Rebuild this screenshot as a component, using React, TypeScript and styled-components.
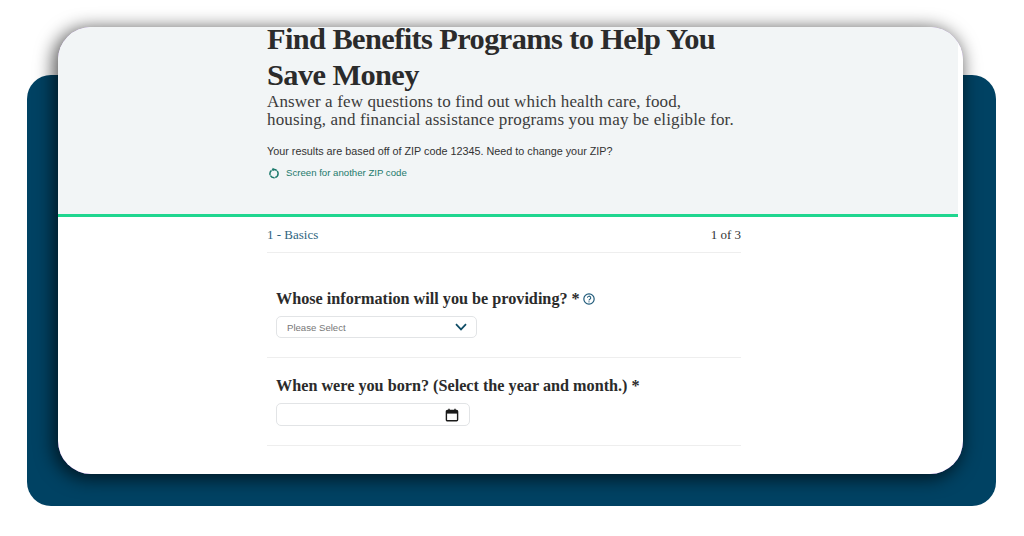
import React from "react";
import styled, { createGlobalStyle } from "styled-components";

const GlobalStyle = createGlobalStyle`
  html, body {
    margin: 0;
    padding: 0;
    background: #fff;
  }
`;

const App = () => {
  return (
    <>
      <GlobalStyle />
      <Stage>
        <Backdrop />
        <Card>
          <Surface>
            <Hero>
              <Column>
                <Title>Find Benefits Programs to Help You Save Money</Title>
                <Lead>
                  Answer a few questions to find out which health care, food,
                  housing, and financial assistance programs you may be eligible for.
                </Lead>
                <ZipNote>Your results are based off of ZIP code 12345. Need to change your ZIP?</ZipNote>
                <ZipLink>
                  <svg width="12" height="12" viewBox="0 0 12 12" fill="none">
                    <circle cx="6" cy="6.6" r="4.1" stroke="#1d7a6c" strokeWidth="1.5" strokeDasharray="5 .6" />
                    <path d="M4.4.8 7.6 2.4 4.8 4z" fill="#1d7a6c" />
                  </svg>
                  Screen for another ZIP code
                </ZipLink>
              </Column>
            </Hero>
            <HeroRule />
            <Column>
              <StepRow>
                <StepName>1 - Basics</StepName>
                <StepCount>1 of 3</StepCount>
              </StepRow>
              <Question $top={36} $bottom={19}>
                <QuestionLabel>
                  Whose information will you be providing? *
                  <svg width="12" height="12" viewBox="0 0 13 13" fill="none">
                    <circle cx="6.5" cy="6.5" r="5.6" stroke="#1f5a7a" strokeWidth="1.3" />
                    <path d="M4.8 5.2a1.8 1.8 0 1 1 2.6 1.6c-.6.3-.9.6-.9 1.2" stroke="#1f5a7a" strokeWidth="1.1" />
                    <circle cx="6.5" cy="9.6" r=".7" fill="#1f5a7a" />
                  </svg>
                </QuestionLabel>
                <SelectBox>
                  Please Select
                  <svg width="12" height="8" viewBox="0 0 12 8" fill="none">
                    <path d="M1 1.2 6 6.4l5-5.2" stroke="#0f4c66" strokeWidth="1.7" />
                  </svg>
                </SelectBox>
              </Question>
              <Question $top={18} $bottom={19}>
                <QuestionLabel>When were you born? (Select the year and month.) *</QuestionLabel>
                <DateBox>
                  <svg width="14" height="14" viewBox="0 0 14 14" fill="none">
                    <rect x="1.4" y="2.4" width="11.2" height="10.4" rx="1" stroke="#1a1a1a" strokeWidth="1.4" />
                    <path d="M1.4 3h11.2v2.6H1.4z" fill="#1a1a1a" />
                    <path d="M4 .8v2M10 .8v2" stroke="#1a1a1a" strokeWidth="1.4" />
                  </svg>
                </DateBox>
              </Question>
            </Column>
          </Surface>
        </Card>
      </Stage>
    </>
  );
};

export default App;

const Stage = styled.div`
  position: relative;
  width: 1024px;
  height: 536px;
  box-sizing: border-box;
  padding: 27px 61px 62px 58px;
  overflow: hidden;
`;
const Backdrop = styled.div`
  position: absolute;
  left: 27px;
  top: 75px;
  width: 969px;
  height: 431px;
  background-color: #004263;
  border-radius: 24px;
`;
const Card = styled.div`
  position: relative;
  height: 100%;
  background-color: #7a3fc0;
  border-radius: 33px;
  box-shadow: -3px 3px 18px 2px rgba(0, 0, 0, 0.65);
`;
const Surface = styled.div`
  height: 100%;
  background-color: #fff;
  border-radius: 33px;
`;
const Hero = styled.div`
  display: flow-root;
  height: 187px;
  border-radius: 33px 33px 0 0;
  background: linear-gradient(to right, #f2f5f6 900px, #fff 900px);
`;
const HeroRule = styled.div`
  width: 900px;
  height: 3px;
  background-color: #1fd68f;
`;
const Column = styled.div`
  width: 474px;
  margin-left: 209px;
`;
const Title = styled.h1`
  margin: -6px 0 0;
  font-family: "Liberation Serif", serif;
  font-size: 30.4px;
  line-height: 36px;
  font-weight: 700;
  letter-spacing: -0.6px;
  color: #2b2b2b;
`;
const Lead = styled.p`
  margin: 0;
  font-family: "Liberation Serif", serif;
  font-size: 17px;
  line-height: 18px;
  letter-spacing: 0.14px;
  color: #3c3c3c;
`;
const ZipNote = styled.p`
  margin: 15px 0 0;
  font-family: "Liberation Sans", sans-serif;
  font-size: 10.8px;
  line-height: 14px;
  color: #333;
`;
const ZipLink = styled.div`
  display: flex;
  align-items: center;
  gap: 6px;
  margin: 8px 0 0 1px;
  font-family: "Liberation Sans", sans-serif;
  font-size: 9.65px;
  line-height: 14px;
  color: #1d7a6c;
`;
const StepRow = styled.div`
  display: flex;
  justify-content: space-between;
  align-items: center;
  height: 35px;
  border-bottom: 1px solid #eeeeee;
  font-family: "Liberation Serif", serif;
  font-size: 13px;
`;
const StepName = styled.span`
  color: #2e6480;
`;
const StepCount = styled.span`
  color: #333;
`;
const Question = styled.div<{ $top: number; $bottom: number }>`
  padding: ${(props) => props.$top}px 0 ${(props) => props.$bottom}px 9px;
  border-bottom: 1px solid #eeeeee;
`;
const QuestionLabel = styled.div`
  display: flex;
  align-items: center;
  gap: 3px;
  font-family: "Liberation Serif", serif;
  font-size: 16.2px;
  line-height: 20px;
  font-weight: 700;
  color: #2b2b2b;
`;
const SelectBox = styled.div`
  display: flex;
  align-items: center;
  justify-content: space-between;
  box-sizing: border-box;
  width: 201px;
  height: 22px;
  margin-top: 7px;
  padding: 0 9px 0 10px;
  border: 1px solid #e2e4e6;
  border-radius: 5px;
  font-family: "Liberation Sans", sans-serif;
  font-size: 9.6px;
  color: #777;
`;
const DateBox = styled.div`
  display: flex;
  align-items: center;
  justify-content: flex-end;
  box-sizing: border-box;
  width: 194px;
  height: 23px;
  margin-top: 7px;
  padding-right: 10px;
  border: 1px solid #e2e4e6;
  border-radius: 5px;
`;
